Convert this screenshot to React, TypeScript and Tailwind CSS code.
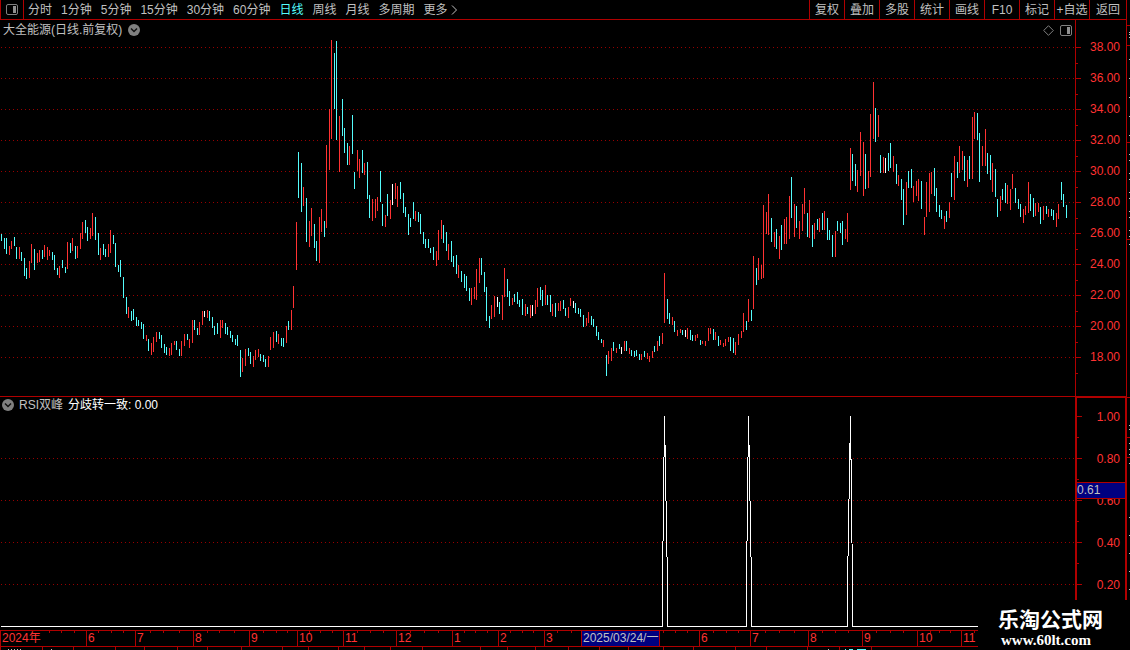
import React from "react";

// Daily price ranges: colour key (c falling, r rising, w flat), x, top, bottom.
const BARS = `c1,234,241 c4,238,249 c6,238,254 r9,246,255 r11,241,249 c14,237,246 c16,247,259 r19,247,259 c21,252,261 c24,258,276 c26,268,279 r29,261,278 r31,244,263 c34,249,270 r37,253,263 r39,250,262 c42,250,259 r44,245,257 r47,247,260 r49,250,256 c52,252,260 c54,255,270 c57,268,275 r59,266,278 c62,260,268 c65,267,273 r67,242,269 c70,243,253 r72,238,251 c75,246,259 r77,246,258 r80,233,249 r82,222,239 c85,220,233 c87,227,241 r90,228,239 r92,213,236 c95,217,240 c98,233,255 r100,248,260 c103,244,255 c105,249,257 r108,244,257 r110,230,253 c113,235,244 c115,243,267 c118,265,272 c120,260,277 c123,277,298 c126,297,314 r128,307,318 c131,311,321 c133,309,320 c136,317,326 c138,320,326 c141,322,329 c143,324,339 r146,335,341 c148,339,351 r151,343,355 r153,337,352 r156,332,342 c159,332,339 c161,335,348 c164,344,353 c166,347,355 r169,348,356 r171,343,355 r174,341,345 c176,341,350 c179,349,356 r181,341,356 r184,334,346 c187,334,340 r189,339,348 r192,320,343 c194,320,330 c197,328,335 r199,322,335 r202,311,325 w204,311,317 r207,310,318 c209,311,321 c212,317,328 c214,326,335 c217,323,334 r220,320,338 r222,320,328 c225,323,334 c227,327,335 c230,331,338 c232,335,342 c235,339,345 c237,335,346 c240,350,377 r242,358,372 r245,349,366 c248,348,356 c250,352,364 r253,356,367 r255,350,360 r258,349,357 c260,354,361 c263,355,362 c265,359,367 r268,356,367 r270,337,350 r273,332,348 c276,331,342 r278,334,344 c281,338,346 c283,338,347 r286,326,343 c288,321,330 r291,310,330 r293,286,308 r296,222,270 c298,152,198 c301,163,212 r303,187,206 c306,198,242 r309,221,247 r311,208,236 c314,224,248 c316,241,261 r319,217,263 r321,209,232 c324,221,237 r326,145,228 r329,109,170 r331,40,139 c334,53,109 c336,41,140 r339,116,172 c342,99,136 c344,128,153 c347,143,165 r349,146,165 c352,115,154 c354,172,189 r357,150,171 r359,159,178 c362,150,173 r364,163,175 c367,162,199 c369,195,218 r372,199,221 r375,199,218 r377,197,211 c380,171,202 c382,204,226 r385,215,227 c387,194,216 r390,200,219 w392,184,205 r395,183,199 r397,186,207 c400,182,199 c403,193,213 c405,207,217 c408,214,235 c410,218,227 c413,202,219 r415,211,221 c418,212,222 c420,214,234 c423,232,244 c425,239,248 c428,239,248 c430,248,253 c433,247,260 r436,251,266 r438,230,260 r441,220,239 c443,225,243 c446,232,251 r448,244,260 c451,241,262 c453,256,267 c456,255,274 r458,265,278 c461,271,282 c464,274,288 c466,276,291 c469,288,301 r471,288,305 r474,287,299 r476,269,300 r479,258,283 c481,258,275 c484,272,292 c486,287,321 c489,316,328 r491,305,319 r494,296,317 w497,297,307 c499,302,314 r502,295,320 r504,268,297 c507,279,297 c509,291,306 r512,298,305 c514,294,302 c517,292,304 c519,300,307 c522,299,315 r525,304,316 c527,307,314 r530,305,318 w532,305,316 r535,300,314 r537,288,307 c540,287,300 c542,290,306 r545,285,305 c547,295,305 c550,295,312 r552,304,316 c555,303,317 r558,303,311 r560,301,311 c563,300,309 c565,308,316 r568,307,318 r570,298,306 w573,301,308 c575,303,313 c578,308,314 c580,309,317 c583,315,327 r586,318,326 r588,312,323 c591,316,325 c593,319,327 c596,326,336 c598,332,340 c601,339,343 r603,340,347 c606,355,376 r608,351,364 r611,348,361 c613,342,351 r616,348,353 c619,344,349 w621,347,354 r624,341,351 c626,341,351 r629,348,354 c631,350,356 c634,351,357 c636,350,356 c639,354,360 r641,354,360 c644,351,357 r647,353,359 r649,356,362 r652,351,358 c654,346,352 r657,341,351 c659,336,346 r662,333,344 r664,273,323 c667,299,319 c669,313,324 r672,317,325 c674,321,332 r677,330,336 r680,329,333 c682,330,335 w685,330,337 r687,328,339 c690,330,340 c692,335,341 r695,335,341 r697,334,338 c700,340,345 r702,341,344 r705,341,346 r708,328,341 r710,328,334 c713,329,340 r715,332,340 c718,336,346 r720,340,345 r723,343,347 r725,339,346 r728,337,342 c730,337,351 c733,338,353 r735,342,355 r738,334,345 r741,331,338 r743,313,332 c746,321,330 r748,299,322 c751,310,321 r753,256,309 c756,268,285 r758,258,280 r761,265,279 r763,205,278 r766,212,234 r768,194,235 c771,218,242 r774,232,247 c776,229,249 r779,236,259 c781,225,250 r784,219,244 r786,217,244 r789,196,239 c791,177,218 r794,204,237 c796,206,228 r799,221,239 r802,204,231 r804,188,214 c807,213,237 r809,200,238 c812,225,247 r814,223,239 c817,219,230 r819,218,232 c822,213,230 r824,211,230 c827,218,240 c829,230,240 c832,235,257 r835,231,257 c837,221,231 c840,223,233 c842,221,245 r845,229,239 r847,213,242 r850,148,190 c852,154,181 c855,164,186 r857,170,192 r860,132,176 r863,142,196 c865,154,189 r868,171,188 r870,114,177 r873,82,139 c875,108,142 r878,115,137 c880,155,173 r883,157,173 w885,158,173 c888,153,171 c890,143,168 r893,156,172 c896,164,184 r898,175,186 c901,179,200 c903,189,225 r906,182,215 c908,171,188 c911,169,188 r913,186,202 r916,181,196 r918,179,201 c921,181,209 r924,217,235 r926,182,217 r929,173,212 r931,172,194 c934,168,196 c936,188,212 c939,205,217 c941,210,219 r944,216,229 c946,211,222 r949,202,218 c951,173,197 r954,156,200 c957,162,178 r959,146,173 r962,151,170 c964,156,181 r967,160,187 c969,156,179 r972,117,179 r974,112,139 c977,113,140 c979,133,182 r982,146,166 r985,129,166 c987,153,174 c990,155,180 r992,163,192 c995,169,197 c997,199,217 r1000,196,211 c1002,189,200 c1005,183,203 r1007,185,204 r1010,189,210 r1012,174,189 c1015,188,203 c1018,199,209 c1020,204,217 r1023,209,223 r1025,206,215 r1028,182,213 c1030,194,211 c1033,198,217 r1035,203,216 r1038,203,212 c1040,207,224 r1043,206,220 c1046,206,214 r1048,209,217 c1051,209,216 c1053,210,220 r1056,213,227 r1058,204,219 c1061,182,200 c1063,194,207 c1066,205,218`
  .split(" ")
  .map((s) => {
    const [x, top, bottom] = s.slice(1).split(",").map(Number);
    return { kind: s[0], x, top: top - 20, bottom: bottom - 20 };
  });

const BAR_FILL: Record<string, string> = { c: "#54fcfc", r: "#ff3232", w: "#ffffff" };
const LINE = "#b00000";

const PERIODS = ["分时", "1分钟", "5分钟", "15分钟", "30分钟", "60分钟", "日线", "周线", "月线", "多周期", "更多"];
const TOOLS = ["复权", "叠加", "多股", "统计", "画线", "F10", "标记", "+自选"];
const PRICES = ["38.00", "36.00", "34.00", "32.00", "30.00", "28.00", "26.00", "24.00", "22.00", "20.00", "18.00"];
const LEVELS = ["1.00", "0.80", "0.60", "0.40", "0.20"];

const MONTHS = [
  { label: "2024年", width: 86 },
  { label: "6", width: 49 },
  { label: "7", width: 58 },
  { label: "8", width: 56 },
  { label: "9", width: 48 },
  { label: "10", width: 46 },
  { label: "11", width: 53 },
  { label: "12", width: 56 },
  { label: "1", width: 46 },
  { label: "2", width: 46 },
  { label: "3", width: 37 },
  { label: "2025/03/24/一", width: 78, active: true },
  { label: "", width: 40 },
  { label: "6", width: 51 },
  { label: "7", width: 58 },
  { label: "8", width: 54 },
  { label: "9", width: 55 },
  { label: "10", width: 44 },
  { label: "11", width: 60 },
];

const WEEK_TICKS = [49, 61, 74, 98, 111, 123, 150, 163, 179, 207, 219, 234, 263, 276, 287, 309, 320, 332, 357, 370, 383, 410, 424, 438, 464, 475, 487, 510, 522, 533, 557, 571, 663, 675, 687, 713, 726, 738, 765, 779, 794, 822, 835, 848, 876, 890, 903, 930, 939, 950, 974];
const FOOT_TICKS = [0, 42, 73, 115, 144, 177, 207, 241, 282, 308, 338, 364, 390, 422, 480, 507, 535, 568, 599, 628, 663, 693, 735, 766, 807, 839, 871];

// Edges of the neighbouring quote panel that show at the window border.
const SIDE_RULES = [25, 45, 142, 239, 397, 437, 457];
const SIDE_MARKS = [32, 34, 37, 59, 78, 97, 116, 135, 154, 160, 173, 179, 192, 198, 211, 217, 230, 236, 244, 425, 429, 443, 449, 454, 463, 517, 535, 553, 571, 589];

function PanelIcon() {
  return (
    <svg width="12" height="11" viewBox="0 0 12 11" aria-hidden="true">
      <rect x="0.5" y="0.5" width="11" height="10" rx="1.5" fill="none" stroke="#808080" />
      <rect x="7" y="2" width="3" height="7" fill="#909090" />
    </svg>
  );
}

function ChevronDisc() {
  return (
    <svg width="12" height="12" viewBox="0 0 12 12" aria-hidden="true">
      <circle cx="6" cy="6" r="6" fill="#808080" />
      <path d="M3 4.5 6 7.5 9 4.5" fill="none" stroke="#101010" strokeWidth="1.5" />
    </svg>
  );
}

function DotRow({ y }: { y: number }) {
  return <line x1="1" x2="100%" y1={y + 0.5} y2={y + 0.5} stroke="#980000" strokeDasharray="1 3" shapeRendering="crispEdges" />;
}

function AxisTicks({ first, step, count, half }: { first: number; step: number; count: number; half: number }) {
  const rows = Array.from({ length: count }, (_, i) => first + i * step);
  return (
    <svg className="h-full w-[5px] shrink-0" aria-hidden="true">
      {rows.map((y) => (
        <g key={y} fill={LINE}>
          <rect x="0" y={y} width="5" height="1" />
          <rect x="0" y={y + half} width="2" height="1" />
        </g>
      ))}
    </svg>
  );
}

export default function App() {
  return (
    <div className="relative flex min-h-screen w-full overflow-hidden bg-black font-['Liberation_Sans','Noto_Sans_CJK_SC',sans-serif] text-xs leading-4 text-[#c0c0c0]">
      <div className="flex min-w-0 flex-1 flex-col">
        <header className="flex h-5 items-stretch border-b border-[#b00000]">
          <button aria-label="侧栏" className="flex w-6 shrink-0 items-center justify-center border-x border-[#b00000]">
            <PanelIcon />
          </button>
          <nav className="flex flex-1 items-center gap-[9px] pl-1 whitespace-nowrap">
            {PERIODS.map((p) => (
              <button key={p} className={p === "日线" ? "text-[#54fcfc]" : ""}>
                {p}
              </button>
            ))}
            <svg className="-ml-1.5" width="6" height="10" viewBox="0 0 6 10" aria-hidden="true">
              <path d="M1 0.5 5.5 5 1 9.5" fill="none" stroke="#c0c0c0" />
            </svg>
          </nav>
          <div className="flex whitespace-nowrap">
            {TOOLS.map((t) => (
              <button key={t} className="w-[35px] border-l border-[#b00000]">
                {t}
              </button>
            ))}
            <button className="w-[37px] border-l border-[#b00000]">返回</button>
          </div>
        </header>

        <section className="flex h-[376px] shrink-0">
          <div className="relative min-w-0 flex-1 overflow-hidden">
            <svg className="block h-full w-full" shapeRendering="crispEdges" role="img" aria-label="日线">
              {PRICES.map((p, i) => (
                <DotRow key={p} y={27 + i * 31} />
              ))}
              {BARS.map((b) => (
                <rect key={b.x} x={b.x} y={b.top} width="1" height={b.bottom - b.top} fill={BAR_FILL[b.kind]} />
              ))}
            </svg>
            <div className="absolute inset-x-0 top-0 flex h-5 items-center gap-1.5 px-[3px]">
              <h1>大全能源(日线.前复权)</h1>
              <button aria-label="展开">
                <ChevronDisc />
              </button>
              <span className="flex-1" />
              <button aria-label="标注">
                <svg width="11" height="11" viewBox="0 0 11 11" aria-hidden="true">
                  <path d="M5.5 0.7 10.3 5.5 5.5 10.3 0.7 5.5Z" fill="none" stroke="#808080" />
                </svg>
              </button>
              <button aria-label="面板">
                <PanelIcon />
              </button>
            </div>
          </div>
          <div className="flex w-[51px] shrink-0 border-l border-[#b00000]">
            <AxisTicks first={27} step={31} count={11} half={16} />
            <ul className="flex-1 pt-3 pr-1.5 text-right text-[#ff3232]">
              {PRICES.map((p) => (
                <li key={p} className="h-[31px] leading-[31px]">
                  {p}
                </li>
              ))}
            </ul>
          </div>
        </section>

        <section className="flex h-[234px] shrink-0 border-t border-[#b00000]">
          <div className="relative min-w-0 flex-1 overflow-hidden">
            <svg className="block h-full w-full" shapeRendering="crispEdges" role="img" aria-label="分歧转一致">
              {[61, 103, 145, 187].map((y) => (
                <DotRow key={y} y={y} />
              ))}
              <path
                d="M1 229.5H662.5V187L664.5 19.5L667.5 187V229.5H746.5V187L748.5 19.5L751.5 187V229.5H847.5V187L850.5 19.5L852.5 187V229.5H1075"
                fill="none"
                stroke="#ffffff"
              />
            </svg>
            <div className="absolute inset-x-0 top-0 flex h-4 items-center gap-[5px] pl-[2px]">
              <button aria-label="指标">
                <ChevronDisc />
              </button>
              <h2>RSI双峰</h2>
              <p className="text-white">分歧转一致: 0.00</p>
            </div>
          </div>
          <div className="relative flex w-[51px] shrink-0 border-t border-r border-l-2 border-[#b00000]">
            <AxisTicks first={18} step={42} count={5} half={21} />
            <ul className="flex-1 pr-[5px] text-right text-[#ff3232]">
              {LEVELS.map((p) => (
                <li key={p} className="h-[42px] leading-[38px]">
                  {p}
                </li>
              ))}
            </ul>
            <p className="absolute inset-x-0 top-[84px] h-[17px] border-y border-[#b00000] bg-[#000080] leading-[15px]">0.61</p>
          </div>
        </section>

        <section className="relative flex h-[17px] shrink-0 overflow-hidden border-y border-[#b00000] whitespace-nowrap">
          <svg className="absolute inset-0 h-full w-full" aria-hidden="true">
            {WEEK_TICKS.map((x) => (
              <rect key={x} x={x} y="0" width="1" height="2" fill={LINE} />
            ))}
          </svg>
          {MONTHS.map((m, i) => (
            <div
              key={i}
              style={{ width: m.width }}
              className={
                m.active
                  ? "shrink-0 overflow-hidden border-l border-[#b00000] bg-[#000080] pl-px leading-[15px]"
                  : "shrink-0 border-l border-[#b00000] pl-px leading-[15px] text-[#ff3232] first:border-l-0"
              }
            >
              {m.label}
            </div>
          ))}
        </section>
        <svg className="block h-[3px] w-full" aria-hidden="true">
          {FOOT_TICKS.map((x) => (
            <rect key={x} x={x} y="0" width="1" height="3" fill={LINE} />
          ))}
          {[8, 11, 14, 17, 20, 51, 828].map((x) => (
            <rect key={x} x={x} y="2" width="1" height="1" fill="#c0c0c0" />
          ))}
          <g fill="#54fcfc">
            <rect x="845" y="2" width="1" height="1" />
            <rect x="849" y="2" width="4" height="1" />
            <rect x="857" y="2" width="9" height="1" />
          </g>
        </svg>
      </div>

      <aside className="flex w-1 shrink-0 border-l border-[#b00000]">
        <svg className="w-full" shapeRendering="crispEdges" aria-hidden="true">
          {SIDE_RULES.map((y) => (
            <rect key={y} x="0" y={y} width="3" height="1" fill={LINE} />
          ))}
          {SIDE_MARKS.map((y) => (
            <rect key={y} x="2" y={y} width="1" height="1" fill="#c0c0c0" />
          ))}
        </svg>
      </aside>

      <div className="absolute right-0 bottom-0 flex h-[50px] w-[152px] flex-col items-start bg-black pt-2 pl-5 text-white">
        <strong className="text-[21px] leading-6">乐淘公式网</strong>
        <a href="#home" className="pl-[3px] font-['Liberation_Serif',serif] text-[15px] leading-4 font-bold">
          www.60lt.com
        </a>
      </div>
    </div>
  );
}
